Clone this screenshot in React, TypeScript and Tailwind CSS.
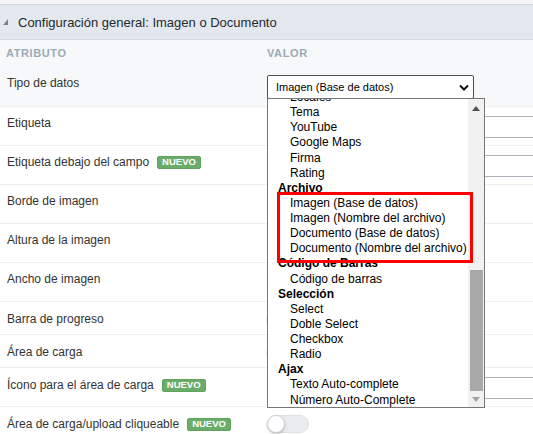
import React from "react";

const Badge = () => (
  <span className="ml-[8px] inline-flex h-[13px] items-center rounded-[2px] border border-[#5fa35f] bg-[#6aad6a] px-[4px] text-[9.5px] font-bold leading-none text-white">
    NUEVO
  </span>
);

const TextInput = () => (
  <div className="mt-[9px] h-[22px] w-[320px] rounded-[2px] border border-[#a9b0b8] bg-white" />
);

const SmallInput = () => (
  <div className="mt-[9px] h-[22px] w-[150px] rounded-[2px] border border-[#a9b0b8] bg-white" />
);

const Toggle = () => (
  <div className="relative mt-[8px] h-[18px] w-[42px] rounded-full border border-[#dcdfe3] bg-[#e9ecef]">
    <div className="absolute left-[-1px] top-[-1px] h-[18px] w-[18px] rounded-full border border-[#cfd3d8] bg-white shadow-[0_1px_2px_rgba(0,0,0,0.25)]" />
  </div>
);

type RowProps = {
  label: string;
  badge?: boolean;
  rowClass: string;
  labelClass: string;
  children?: React.ReactNode;
};

const Row = ({ label, badge, rowClass, labelClass, children }: RowProps) => (
  <div className={rowClass}>
    <div className={labelClass}>
      <span>{label}</span>
      {badge ? <Badge /> : null}
    </div>
    <div className="min-w-0">{children}</div>
  </div>
);

type Item = { t: string; g?: boolean };

const items: Item[] = [
  { t: "Locales" },
  { t: "Tema" },
  { t: "YouTube" },
  { t: "Google Maps" },
  { t: "Firma" },
  { t: "Rating" },
  { t: "Archivo", g: true },
  { t: "Imagen (Base de datos)" },
  { t: "Imagen (Nombre del archivo)" },
  { t: "Documento (Base de datos)" },
  { t: "Documento (Nombre del archivo)" },
  { t: "Código de Barras", g: true },
  { t: "Código de barras" },
  { t: "Selección", g: true },
  { t: "Select" },
  { t: "Doble Select" },
  { t: "Checkbox" },
  { t: "Radio" },
  { t: "Ajax", g: true },
  { t: "Texto Auto-complete" },
  { t: "Número Auto-Complete" },
];

const row39 = "grid h-[39px] grid-cols-[267px_1fr] border-b border-[#eceff2]";
const row33 = "grid h-[33px] grid-cols-[267px_1fr] border-b border-[#eceff2]";
const lab8 = "flex h-[14px] items-center pl-[7px] mt-[9px] whitespace-nowrap";
const lab9 = "flex h-[14px] items-center pl-[7px] mt-[10px] whitespace-nowrap";

export default function App() {
  return (
    <div className="relative h-[434px] w-[533px] overflow-hidden bg-white font-['Liberation_Sans',Arial,sans-serif] text-[12px] text-[#333]">
      <div className="h-[4px] bg-[#f2f4f7]" />
      {/* Section header */}
      <div className="flex h-[36px] items-center border-y border-[#d3dae2] bg-[#e2e8ee]">
        <svg width="5" height="6" viewBox="0 0 5 6" className="ml-[3px]">
          <polygon points="5,0 5,6 0,6" fill="#7d8489" />
        </svg>
        <span className="ml-[10px] text-[13px] leading-none text-[#262a2e]">
          Configuración general: Imagen o Documento
        </span>
      </div>
      {/* Column headers */}
      <div className="grid h-[27px] grid-cols-[267px_1fr] items-center bg-[#f6f8fa] text-[11px] font-bold tracking-[0.6px] text-[#9aabb5]">
        <div className="pl-[6px]">ATRIBUTO</div>
        <div>VALOR</div>
      </div>
      {/* Tipo de datos */}
      <div className="grid h-[40px] grid-cols-[267px_1fr] border-b border-[#eceff2] bg-[#f6f8fa]">
        <div className={lab8}>Tipo de datos</div>
        <div>
          <div className="mt-[8px] flex h-[24px] w-[207px] items-center justify-between rounded-[2px] border border-[#4a4f55] bg-white pl-[8px] pr-[4px] text-[11px] text-black">
            <span>Imagen (Base de datos)</span>
            <svg width="10" height="7" viewBox="0 0 10 7">
              <polyline points="1,1.5 5,5.5 9,1.5" fill="none" stroke="#111" strokeWidth="2" />
            </svg>
          </div>
        </div>
      </div>
      <Row label="Etiqueta" rowClass={row39} labelClass={lab8}>
        <TextInput />
      </Row>
      <Row label="Etiqueta debajo del campo" badge rowClass={row39} labelClass={lab8}>
        <TextInput />
      </Row>
      <Row label="Borde de imagen" rowClass={row39} labelClass={lab8}>
        <SmallInput />
      </Row>
      <Row label="Altura de la imagen" rowClass={row39} labelClass={lab8}>
        <SmallInput />
      </Row>
      <Row label="Ancho de imagen" rowClass={row39} labelClass={lab8}>
        <SmallInput />
      </Row>
      <Row label="Barra de progreso" rowClass={row33} labelClass={lab9}>
        <Toggle />
      </Row>
      <Row label="Área de carga" rowClass={row33} labelClass={lab9}>
        <Toggle />
      </Row>
      <Row label="Ícono para el área de carga" badge rowClass={row39} labelClass={lab9}>
        <TextInput />
      </Row>
      <Row label="Área de carga/upload cliqueable" badge rowClass={row39} labelClass={lab9}>
        <Toggle />
      </Row>

      {/* Open dropdown list */}
      <div className="absolute left-[267px] top-[98px] h-[310px] w-[218px] overflow-hidden border border-[#767676] bg-white text-[12px] text-black">
        <div className="mt-[-9px]">
          {items.map((it, i) => (
            <div
              key={i}
              className={
                it.g
                  ? "h-[15.14px] whitespace-nowrap pl-[10px] font-bold leading-[15.14px]"
                  : "h-[15.14px] whitespace-nowrap pl-[22px] leading-[15.14px]"
              }
            >
              {it.t}
            </div>
          ))}
        </div>
        {/* scrollbar */}
        <div className="absolute bottom-0 right-0 top-0 w-[16px] bg-[#f1f1f1]">
          <svg width="8" height="5" viewBox="0 0 8 5" className="absolute left-[4px] top-[7px]">
            <polygon points="0,5 8,5 4,0" fill="#505050" />
          </svg>
          <div className="absolute left-[2px] top-[171px] h-[121px] w-[13px] bg-[#a8a8a8]" />
          <svg width="8" height="5" viewBox="0 0 8 5" className="absolute left-[4px] top-[298px]">
            <polygon points="0,0 8,0 4,5" fill="#a3a3a3" />
          </svg>
        </div>
        {/* annotation box */}
        <div className="absolute left-[9px] top-[93px] h-[71px] w-[196px] border-[3px] border-[#ff0000]" />
      </div>
    </div>
  );
}
